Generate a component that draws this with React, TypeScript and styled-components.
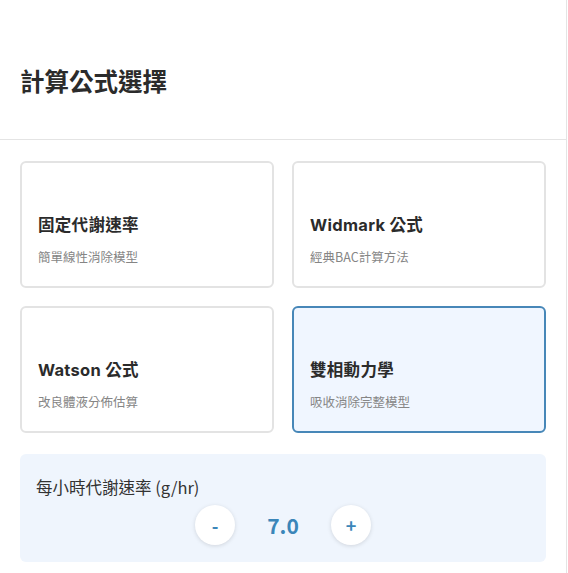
import React, { useState } from "react";
import styled, { createGlobalStyle } from "styled-components";

const GlobalStyle = createGlobalStyle`
  * { box-sizing: border-box; }
  body {
    margin: 0;
    background: #ffffff;
    font-family: "Noto Sans CJK TC", "Noto Sans", sans-serif;
    color: #333333;
  }
`;

const Panel = styled.div`
  width: 567px;
  min-height: 100vh;
  border-right: 1px solid #e4e4e4;
  background: #ffffff;
`;

const Header = styled.div`
  padding: 67px 20px 41px;
  border-bottom: 1px solid #e4e4e4;
`;

const Title = styled.h1`
  margin: 0;
  font-family: Inter, "Noto Sans CJK TC", sans-serif;
  font-size: 24.5px;
  line-height: 31px;
  font-weight: 700;
  color: #2b2b2b;
`;

const Body = styled.div`
  padding: 21px 20px;
`;

const Grid = styled.div`
  display: grid;
  grid-template-columns: 1fr 1fr;
  gap: 18px;
`;

const Card = styled.button<{ $active: boolean }>`
  height: 127px;
  display: flex;
  flex-direction: column;
  justify-content: flex-end;
  align-items: flex-start;
  padding: 16px 16px 20px;
  border: 2px solid ${(p) => (p.$active ? "#4787b8" : "#e3e3e3")};
  border-radius: 6px;
  background: ${(p) => (p.$active ? "#f0f6ff" : "#ffffff")};
  text-align: left;
  cursor: pointer;
  font: inherit;
`;

const CardTitle = styled.div`
  font-family: Inter, "Noto Sans CJK TC", sans-serif;
  font-size: 16.5px;
  line-height: 24px;
  font-weight: 700;
  letter-spacing: 0.3px;
  color: #2b2b2b;
  margin-bottom: 10px;
`;

const CardDesc = styled.div`
  font-size: 12.5px;
  line-height: 19px;
  color: #858585;
`;

const RateBox = styled.div`
  margin-top: 21px;
  height: 108px;
  padding: 21px 16px 0;
  border-radius: 6px;
  background: #eff5fd;
`;

const RateLabel = styled.div`
  font-size: 16.5px;
  line-height: 24px;
  color: #333333;
`;

const Stepper = styled.div`
  margin-top: 6px;
  display: flex;
  align-items: center;
  justify-content: center;
  gap: 18px;
`;

const StepButton = styled.button`
  width: 40px;
  height: 40px;
  border-radius: 50%;
  border: none;
  background: #ffffff;
  box-shadow: 0 1px 4px rgba(0, 0, 0, 0.13);
  color: #3b86b9;
  font-family: "Noto Sans CJK TC", sans-serif;
  font-size: 18px;
  font-weight: 700;
  cursor: pointer;
  display: flex;
  align-items: center;
  justify-content: center;
  padding: 0;
`;

const Value = styled.div`
  width: 60px;
  text-align: center;
  font-size: 21px;
  font-weight: 700;
  color: #3b86b9;
`;

const formulas = [
  { id: "fixed", title: "固定代謝速率", desc: "簡單線性消除模型" },
  { id: "widmark", title: "Widmark 公式", desc: "經典BAC計算方法" },
  { id: "watson", title: "Watson 公式", desc: "改良體液分佈估算" },
  { id: "biphasic", title: "雙相動力學", desc: "吸收消除完整模型" },
];

export default function App() {
  const [selected, setSelected] = useState("biphasic");
  const [rate, setRate] = useState(7);

  return (
    <>
      <GlobalStyle />
      <Panel>
        <Header>
          <Title>計算公式選擇</Title>
        </Header>
        <Body>
          <Grid>
            {formulas.map((f) => (
              <Card key={f.id} $active={selected === f.id} onClick={() => setSelected(f.id)}>
                <CardTitle>{f.title}</CardTitle>
                <CardDesc>{f.desc}</CardDesc>
              </Card>
            ))}
          </Grid>
          <RateBox>
            <RateLabel>每小時代謝速率 (g/hr)</RateLabel>
            <Stepper>
              <StepButton onClick={() => setRate((r) => Math.max(0, r - 0.5))}>-</StepButton>
              <Value>{rate.toFixed(1)}</Value>
              <StepButton onClick={() => setRate((r) => r + 0.5)}>+</StepButton>
            </Stepper>
          </RateBox>
        </Body>
      </Panel>
    </>
  );
}
